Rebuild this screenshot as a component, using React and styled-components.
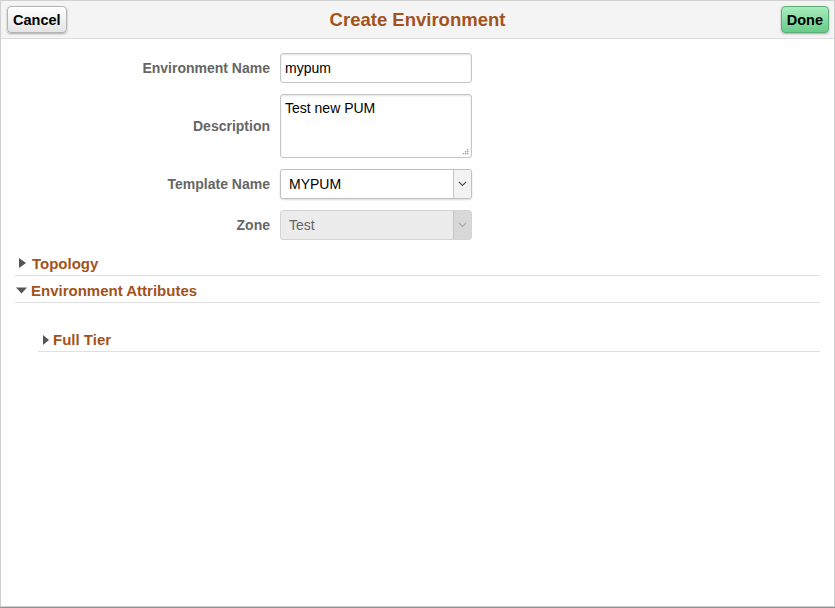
import React from 'react';
import styled, {createGlobalStyle} from 'styled-components';

const GlobalStyle = createGlobalStyle`
    html,body{
        margin:0;
        padding:0;
        background:#fff;
        font-family:"Liberation Sans", Arial, sans-serif;
    }
`;

const Frame = styled.div`
    width:835px;
    height:608px;
    box-sizing:border-box;
    border-bottom:1px solid #6b9bcb;
    overflow:hidden;
`;

const Page = styled.div`
    height:100%;
    box-sizing:border-box;
    border:1px solid #cfcfcf;
    display:flex;
    flex-direction:column;
`;

const Header = styled.div`
    height:37px;
    background:#f4f4f4;
    border-bottom:1px solid #dcdcdc;
    display:flex;
    align-items:center;
    justify-content:space-between;
    padding:0 5px 0 6px;
    position:relative;
`;

const Title = styled.h1`
    position:absolute;
    left:0;
    right:0;
    margin:0;
    text-align:center;
    font-size:18.5px;
    font-weight:700;
    color:#a2531c;
    pointer-events:none;
`;

const HeadButton = styled.button`
    height:27px;
    padding:0 5px;
    font-family:inherit;
    font-size:14.5px;
    font-weight:700;
    color:#000;
    border-radius:4px;
    border:1px solid ${props => props.primary ? '#5aae76' : '#b4b4b4'};
    background:${props => props.primary
        ? 'linear-gradient(#a9ecbd, #68cc89)'
        : 'linear-gradient(#ffffff, #e4e4e4)'};
    box-shadow:0 1px 2px rgba(0,0,0,0.3);
    position:relative;
    z-index:1;
`;

const Form = styled.div`
    display:grid;
    grid-template-columns:269px 192px;
    column-gap:10px;
    row-gap:11px;
    align-items:center;
    margin-top:14px;
`;

const Label = styled.label`
    text-align:right;
    font-size:14px;
    font-weight:700;
    color:#666;
`;

const TextInput = styled.div`
    box-sizing:border-box;
    height:${props => props.tall ? '64px' : '30px'};
    border:1px solid #c6c6c6;
    border-radius:3px;
    box-shadow:inset 0 1px 2px rgba(0,0,0,0.12);
    padding:${props => props.tall ? '5px 4px' : '0 4px'};
    display:flex;
    align-items:${props => props.tall ? 'flex-start' : 'center'};
    font-size:14px;
    color:#000;
    position:relative;
`;

const Grip = styled.svg`
    position:absolute;
    right:2px;
    bottom:2px;
`;

const Select = styled.div`
    box-sizing:border-box;
    height:30px;
    border:1px solid ${props => props.disabled ? '#d4d4d4' : '#c0c0c0'};
    border-radius:3px;
    background:${props => props.disabled ? '#ececec' : '#fff'};
    box-shadow:${props => props.disabled ? 'none' : '0 1px 2px rgba(0,0,0,0.15)'};
    display:flex;
    align-items:stretch;
    font-size:14px;
    color:${props => props.disabled ? '#666' : '#000'};
    overflow:hidden;
`;

const SelectValue = styled.div`
    flex:1;
    display:flex;
    align-items:center;
    padding-left:8px;
`;

const Caret = styled.div`
    width:17px;
    border-left:1px solid ${props => props.disabled ? '#c4c4c4' : '#c8c8c8'};
    background:${props => props.disabled ? '#d8d8d8' : '#f2f2f2'};
    display:flex;
    align-items:center;
    justify-content:center;
`;

const Sections = styled.div`
    padding:11px 14px 0 14px;
`;

const SectionRow = styled.div`
    display:flex;
    align-items:center;
    gap:${props => props.gap}px;
    height:${props => props.small ? '23px' : '24px'};
    border-bottom:1px solid #e0e0e0;
    margin-top:${props => props.first ? '0' : '2px'};
    margin-left:${props => props.indent || 0}px;
    padding-left:${props => props.pad}px;
    font-size:15px;
    font-weight:700;
    color:#a2531c;
`;

const SectionBody = styled.div`
    padding-top:25px;
`;

const Arrow = ({open, small}) => {
    if (open) {
        return <svg width="11" height="7" viewBox="0 0 11 7"><path d="M0 0.5 L11 0.5 L5.5 6.5 Z" fill="#555"/></svg>;
    }
    const w = small ? 6 : 7;
    return <svg width={w} height="10" viewBox={`0 0 ${w} 10`}><path d={`M0 0 L${w} 5 L0 10 Z`} fill="#555"/></svg>;
};

const Chevron = ({color}) => (
    <svg width="9" height="6" viewBox="0 0 9 6">
        <path d="M1 1 L4.5 4.5 L8 1" fill="none" stroke={color} strokeWidth="1.1"/>
    </svg>
);

export default function App() {
    return (
        <>
        <GlobalStyle/>
        <Frame>
            <Page>
                <Header>
                    <HeadButton>Cancel</HeadButton>
                    <Title>Create Environment</Title>
                    <HeadButton primary>Done</HeadButton>
                </Header>
                <Form>
                    <Label>Environment Name</Label>
                    <TextInput>mypum</TextInput>
                    <Label>Description</Label>
                    <TextInput tall>
                        Test new PUM
                        <Grip width="7" height="7" viewBox="0 0 7 7">
                            <rect x="5" y="1" width="1.3" height="1.3" fill="#999"/>
                            <rect x="3" y="3" width="1.3" height="1.3" fill="#999"/>
                            <rect x="5" y="3" width="1.3" height="1.3" fill="#999"/>
                            <rect x="1" y="5" width="1.3" height="1.3" fill="#999"/>
                            <rect x="3" y="5" width="1.3" height="1.3" fill="#999"/>
                            <rect x="5" y="5" width="1.3" height="1.3" fill="#999"/>
                        </Grip>
                    </TextInput>
                    <Label>Template Name</Label>
                    <Select>
                        <SelectValue>MYPUM</SelectValue>
                        <Caret><Chevron color="#555"/></Caret>
                    </Select>
                    <Label>Zone</Label>
                    <Select disabled>
                        <SelectValue>Test</SelectValue>
                        <Caret disabled><Chevron color="#aaa"/></Caret>
                    </Select>
                </Form>
                <Sections>
                    <SectionRow first pad={4} gap={6}><Arrow/>Topology</SectionRow>
                    <SectionRow pad={1} gap={4}><Arrow open/>Environment Attributes</SectionRow>
                    <SectionBody>
                        <SectionRow small first indent={23} pad={5} gap={4}><Arrow small/>Full Tier</SectionRow>
                    </SectionBody>
                </Sections>
            </Page>
        </Frame>
        </>
    );
}
